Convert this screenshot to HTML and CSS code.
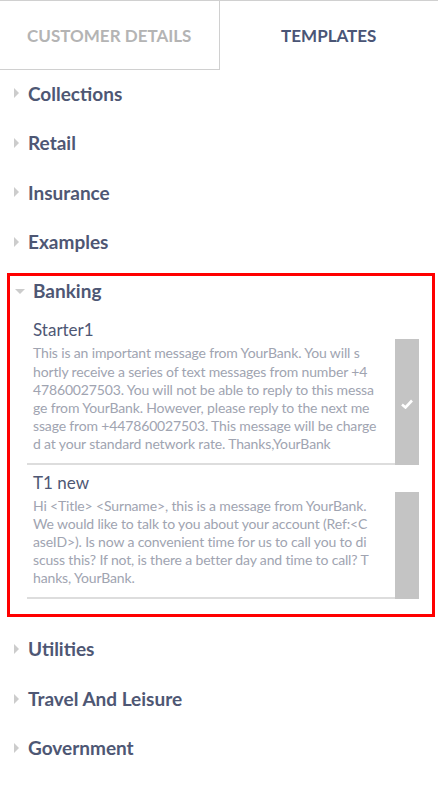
FILE: index.html
```html
<!DOCTYPE html>
<html lang="en">
<head>
    <meta charset="UTF-8">
    <meta name="viewport" content="width=device-width, initial-scale=1.0">
    <link rel="stylesheet" href="styles.css">
</head>
<body>

    <div class="tabs">
        <div class="tab">CUSTOMER DETAILS</div>
        <div class="tab active">TEMPLATES</div>
    </div>

    <div class="categories">
        <div class="category"><span class="arrow"></span>Collections</div>
        <div class="category"><span class="arrow"></span>Retail</div>
        <div class="category"><span class="arrow"></span>Insurance</div>
        <div class="category"><span class="arrow"></span>Examples</div>

        <div class="group open">
            <div class="group-head"><span class="arrow-down"></span>Banking</div>

            <div class="template">
                <div class="template-title">Starter1</div>
                <div class="template-row">
                    <div class="template-body">This is an important message from YourBank. You will s<br>hortly receive a series of text messages from number +4<br>47860027503. You will not be able to reply to this messa<br>ge from YourBank. However, please reply to the next me<br>ssage from +447860027503. This message will be charge<br>d at your standard network rate. Thanks,YourBank</div>
                    <div class="select">
                        <svg width="12" height="10" viewBox="0 0 12 10"><path d="M1 5.5 L4.5 8.5 L11 1.5" fill="none" stroke="#fff" stroke-width="2.6"/></svg>
                    </div>
                </div>
            </div>

            <div class="template">
                <div class="template-title">T1 new</div>
                <div class="template-row">
                    <div class="template-body">Hi &lt;Title&gt; &lt;Surname&gt;, this is a message from YourBank.<br>We would like to talk to you about your account (Ref:&lt;C<br>aseID&gt;). Is now a convenient time for us to call you to di<br>scuss this? If not, is there a better day and time to call? T<br>hanks, YourBank.</div>
                    <div class="select"></div>
                </div>
            </div>
        </div>

        <div class="category"><span class="arrow"></span>Utilities</div>
        <div class="category"><span class="arrow"></span>Travel And Leisure</div>
        <div class="category"><span class="arrow"></span>Government</div>
    </div>

</body>
</html>
```

FILE: styles.css
```css
body {
    font-family: Lato, "Noto Sans", sans-serif;
    margin: 0;
    background-color: #fff;
    color: #4e5774;
}
.tabs {
    display: flex;
    border-top: 1px solid #d0d0d0;
}
.tab {
    flex: 1;
    height: 68px;
    display: flex;
    align-items: center;
    justify-content: center;
    font-size: 17px;
    font-weight: 700;
    color: #b4b4b4;
    border-right: 1px solid #d0d0d0;
    border-bottom: 1px solid #d0d0d0;
}
.tab.active {
    color: #4a5576;
    border-right: none;
    border-bottom: none;
}
.category {
    display: flex;
    align-items: center;
    padding: 12.5px 0 15.5px;
    line-height: 21.6px;
    font-size: 19px;
    font-weight: 700;
}
.arrow {
    width: 0;
    height: 0;
    border-top: 5px solid transparent;
    border-bottom: 5px solid transparent;
    border-left: 5px solid #cccccc;
    margin: 0 9px 0 14px;
}
.group {
    margin: 5px 3px 9px 7px;
    border: 3px solid #ff0000;
    padding-bottom: 15px;
}
.group-head {
    display: flex;
    align-items: center;
    padding: 4px 0 10px;
    line-height: 22px;
    font-size: 19px;
    font-weight: 700;
}
.arrow-down {
    width: 0;
    height: 0;
    border-left: 5px solid transparent;
    border-right: 5px solid transparent;
    border-top: 5px solid #cccccc;
    margin: 0 8px 0 5px;
}
.template {
    margin: 0 13px 0 17px;
}
.template-title {
    padding: 8px 0 0 6px;
    line-height: 19px;
    font-size: 17px;
}
.template-row {
    display: flex;
}
.template-body {
    flex: 1;
    padding: 5px 0 9px 6px;
    font-size: 14px;
    line-height: 18.2px;
    letter-spacing: -0.15px;
    color: #a0a4b1;
    white-space: nowrap;
    border-bottom: 2px solid #dddddd;
}
.select {
    width: 24px;
    background-color: #c4c4c4;
    display: flex;
    align-items: center;
    justify-content: center;
    padding-top: 4px;
}
```
